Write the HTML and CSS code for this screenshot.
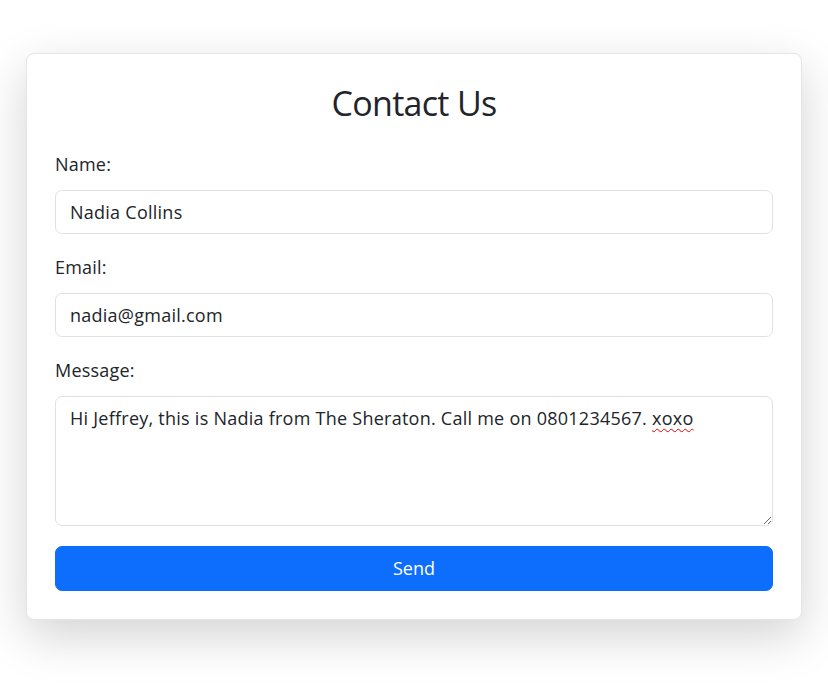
FILE: index.html
```html
<!DOCTYPE html>
<html lang="en">
<head>
<meta charset="utf-8">
<title>Contact Us</title>
<link rel="stylesheet" href="styles.css">
</head>
<body>
<main class="card">
  <h2 class="title">Contact Us</h2>
  <form class="form">
    <div class="group">
      <label class="label" for="name">Name:</label>
      <input class="control" id="name" type="text" value="Nadia Collins">
    </div>
    <div class="group">
      <label class="label" for="email">Email:</label>
      <input class="control" id="email" type="email" value="nadia@gmail.com">
    </div>
    <div class="group">
      <label class="label" for="message">Message:</label>
      <div class="control area" id="message">Hi Jeffrey, this is Nadia from The Sheraton. Call me on 0801234567. <span class="misspelt">xoxo</span></div>
    </div>
    <button class="send" type="button">Send</button>
  </form>
</main>
</body>
</html>
```

FILE: styles.css
```css
* { box-sizing: border-box; }
html, body { margin: 0; background: #fff; }
body {
  font-family: "Open Sans", "Noto Sans", sans-serif;
  color: #212529;
  font-size: 18px;
  line-height: 27px;
  letter-spacing: 0.2px;
  padding: 53px 0 80px;
  min-height: 696px;
}
.card {
  width: 776px;
  margin: 0 auto;
  background: #fff;
  border: 1px solid #e3e5e8;
  border-radius: 8px;
  padding: 28px 28px 28px;
  box-shadow: 0 16px 48px rgba(0, 0, 0, 0.175);
}
.title {
  margin: 0 0 26px;
  font-size: 34px;
  line-height: 43px;
  font-weight: 400;
  letter-spacing: -0.7px;
  text-align: center;
}
.form { display: flex; flex-direction: column; gap: 20px; }
.group { display: flex; flex-direction: column; }
.label { display: block; margin-bottom: 12px; padding-top: 4px; margin-top: -4px; }
.control {
  display: block;
  width: 100%;
  height: 44px;
  padding: 7.5px 14px;
  font: inherit;
  letter-spacing: 0.25px;
  color: #212529;
  background: #fff;
  border: 1px solid #dee2e6;
  border-radius: 7px;
  outline: none;
}
.area {
  height: 130px;
  resize: vertical;
  overflow: auto;
  white-space: pre-wrap;
}
.misspelt {
  text-decoration: underline wavy #e00;
  text-decoration-thickness: 1px;
  text-underline-offset: 3px;
}
.send {
  display: block;
  width: 100%;
  height: 45px;
  padding: 8px 12px 10px;
  font: inherit;
  color: #fff;
  background: #0d6efd;
  border: 1px solid #0d6efd;
  border-radius: 7px;
  cursor: pointer;
}
```
